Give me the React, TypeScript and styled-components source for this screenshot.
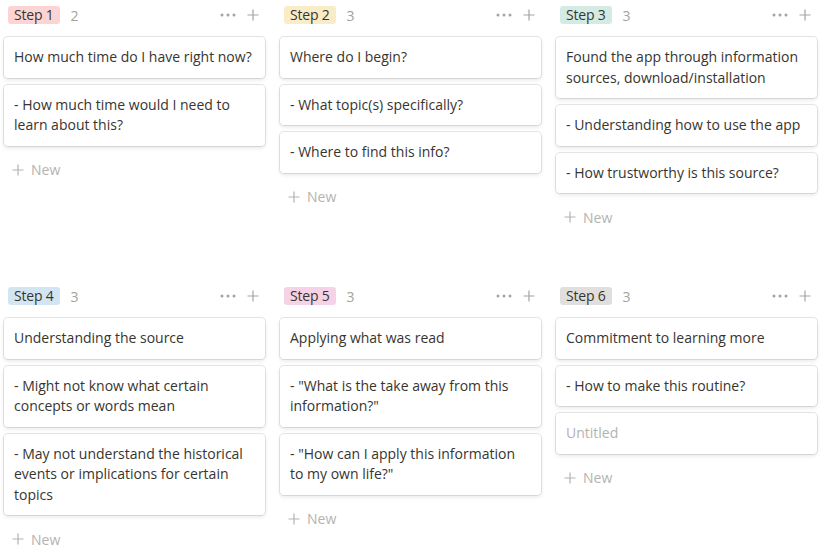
import React from "react";
import styled, { createGlobalStyle } from "styled-components";

const Global = createGlobalStyle`
  html, body { margin: 0; padding: 0; background: #ffffff; }
  body { font-family: "Open Sans", "Noto Sans", sans-serif; color: #37352f; }
  * { box-sizing: border-box; }
`;

type Group = { label: string; tag: string; cards: string[] };

const groups: Group[] = [
  { label: "Step 1", tag: "#fdd4d4", cards: ["How much time do I have right now?", "- How much time would I need to learn about this?"] },
  { label: "Step 2", tag: "#fbecc8", cards: ["Where do I begin?", "- What topic(s) specifically?", "- Where to find this info?"] },
  { label: "Step 3", tag: "#d3ebe2", cards: ["Found the app through information sources, download/installation", "- Understanding how to use the app", "- How trustworthy is this source?"] },
  { label: "Step 4", tag: "#d3e5f3", cards: ["Understanding the source", "- Might not know what certain concepts or words mean", "- May not understand the historical events or implications for certain topics"] },
  { label: "Step 5", tag: "#f6d2e7", cards: ["Applying what was read", "- \"What is the take away from this information?\"", "- \"How can I apply this information to my own life?\""] },
  { label: "Step 6", tag: "#e0dfdd", cards: ["Commitment to learning more", "- How to make this routine?", ""] },
];

const Board = styled.div`
  display: grid;
  grid-template-columns: repeat(3, 261px);
  column-gap: 15px;
  row-gap: 47px;
  align-items: start;
  padding-left: 4px;
`;

const Column = styled.section`
  display: flex;
  flex-direction: column;
`;

const Header = styled.div`
  display: flex;
  align-items: center;
  height: 31px;
  padding: 6px 6px 7px 4px;
`;

const Tag = styled.span<{ $bg: string }>`
  display: inline-flex;
  align-items: center;
  height: 18px;
  padding: 0 6px;
  border-radius: 3px;
  background: ${(p) => p.$bg};
  font-size: 14px;
  line-height: 18px;
  letter-spacing: -0.2px;
  color: #37352f;
  white-space: nowrap;
`;

const Count = styled.span`
  margin-left: 11px;
  font-size: 14px;
  color: #a3a29f;
`;

const Spacer = styled.div`
  flex: 1;
`;

const IconBtn = styled.span`
  display: inline-flex;
  align-items: center;
  justify-content: center;
  color: #a5a4a1;
`;

const Cards = styled.div`
  display: flex;
  flex-direction: column;
  gap: 7px;
  margin-top: 6px;
`;

const Card = styled.div<{ $placeholder?: boolean }>`
  background: #ffffff;
  border-radius: 4px;
  box-shadow: rgba(15, 15, 15, 0.1) 0 0 0 1px, rgba(15, 15, 15, 0.1) 0 2px 4px;
  padding: 10px 10px;
  font-size: 14px;
  line-height: 20.5px;
  font-weight: 500;
  color: ${(p) => (p.$placeholder ? "#b4b3b0" : "#37352f")};
`;

const NewRow = styled.div`
  display: flex;
  align-items: center;
  gap: 7px;
  height: 34px;
  padding-left: 8px;
  font-size: 14px;
  color: #b4b3b0;
`;

const Dots = () => (
  <svg width="16" height="4" viewBox="0 0 16 4">
    <circle cx="2" cy="2" r="1.5" fill="currentColor" />
    <circle cx="8" cy="2" r="1.5" fill="currentColor" />
    <circle cx="14" cy="2" r="1.5" fill="currentColor" />
  </svg>
);

const Plus = ({ size = 12 }: { size?: number }) => (
  <svg width={size} height={size} viewBox="0 0 12 12">
    <path d="M6 0.5V11.5M0.5 6H11.5" stroke="currentColor" strokeWidth="1.2" fill="none" />
  </svg>
);

const Actions = styled.div`
  display: flex;
  align-items: center;
  gap: 11px;
`;

export default function App() {
  return (
    <>
      <Global />
      <Board>
        {groups.map((g) => (
          <Column key={g.label}>
            <Header>
              <Tag $bg={g.tag}>{g.label}</Tag>
              <Count>{g.cards.length}</Count>
              <Spacer />
              <Actions>
                <IconBtn><Dots /></IconBtn>
                <IconBtn><Plus /></IconBtn>
              </Actions>
            </Header>
            <Cards>
              {g.cards.map((c, i) =>
                c === "" ? (
                  <Card key={i} $placeholder>Untitled</Card>
                ) : (
                  <Card key={i}>{c}</Card>
                )
              )}
              <NewRow>
                <Plus />
                <span>New</span>
              </NewRow>
            </Cards>
          </Column>
        ))}
      </Board>
    </>
  );
}
